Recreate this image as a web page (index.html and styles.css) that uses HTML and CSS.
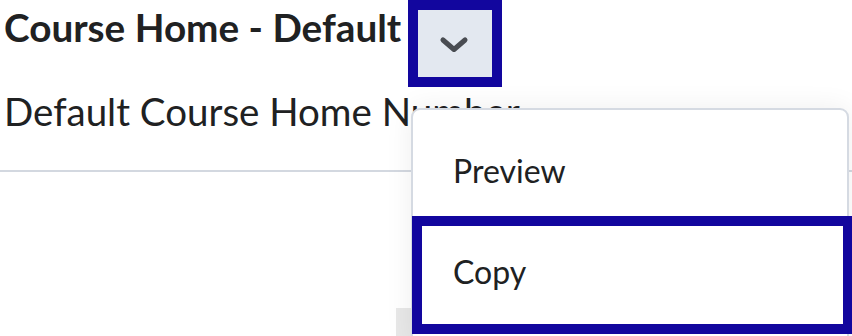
FILE: index.html
```html
<!DOCTYPE html>
<html lang="en">
<head>
<meta charset="utf-8">
<title>Course Home - Default</title>
<link rel="stylesheet" href="styles.css">
</head>
<body>
<div class="page">
  <div class="header">
    <h1 class="title">Course Home - Default</h1>
    <button class="toggle" aria-label="Actions">
      <svg width="30" height="18" viewBox="0 0 30 18" aria-hidden="true">
        <path d="M4 4 L15 13.5 L26 4" fill="none" stroke="#494c52" stroke-width="5" stroke-linecap="round" stroke-linejoin="round"/>
      </svg>
    </button>
  </div>
  <p class="subtitle">Default Course Home Number</p>
  <hr class="divider">
  <div class="cover"></div>
  <div class="scrollbit"></div>
  <div class="menu" role="menu">
    <div class="item item-preview" role="menuitem">Preview</div>
    <div class="item item-copy" role="menuitem">Copy</div>
  </div>
</div>
</body>
</html>
```
FILE: styles.css
```css
html, body {
  margin: 0;
  padding: 0;
  background: #ffffff;
}
body {
  font-family: Lato, "Open Sans", sans-serif;
  color: #202122;
  width: 852px;
  height: 336px;
  overflow: hidden;
}
.page {
  position: relative;
  width: 852px;
  height: 336px;
}
.header {
  display: flex;
  align-items: flex-start;
  height: 77px;
}
.title {
  margin: 0;
  padding-left: 4px;
  font-size: 38.7px;
  font-weight: 700;
  line-height: 55px;
  white-space: nowrap;
}
.toggle {
  flex: none;
  margin: 10px 0 0 17px;
  width: 74px;
  height: 67px;
  padding: 0;
  border: none;
  background: #e3e8f0;
  outline: 10px solid #12069e;
  display: flex;
  align-items: center;
  justify-content: center;
}
.toggle svg {
  display: block;
  margin: 3px 3px 0 0;
}
.subtitle {
  margin: 10px 0 0 0;
  padding-left: 4px;
  font-size: 38.5px;
  line-height: 48px;
  font-weight: 400;
  white-space: nowrap;
}
.divider {
  margin: 35px 0 0 0;
  border: none;
  height: 2px;
  background: #d3d8e0;
}
.cover {
  position: absolute;
  left: 330px;
  top: 209px;
  width: 82px;
  height: 127px;
  background: #ffffff;
}
.scrollbit {
  position: absolute;
  left: 396px;
  top: 308px;
  width: 16px;
  height: 28px;
  background: #e8e8e8;
}
.menu {
  position: absolute;
  left: 411px;
  top: 108px;
  width: 438px;
  height: 240px;
  box-sizing: border-box;
  background: #ffffff;
  border: 2px solid #d5dae2;
  border-radius: 9px;
  box-shadow: 0 0 28px rgba(0, 0, 0, 0.07);
}
.item {
  font-size: 32px;
  line-height: 38px;
  color: #202122;
}
.item-preview {
  height: 106px;
  box-sizing: border-box;
  padding: 42px 0 0 40px;
}
.item-copy {
  margin-left: -1px;
  width: 441px;
  height: 118px;
  box-sizing: border-box;
  border: 10px solid #12069e;
  padding: 27px 0 0 31px;
  background: #ffffff;
}
```
